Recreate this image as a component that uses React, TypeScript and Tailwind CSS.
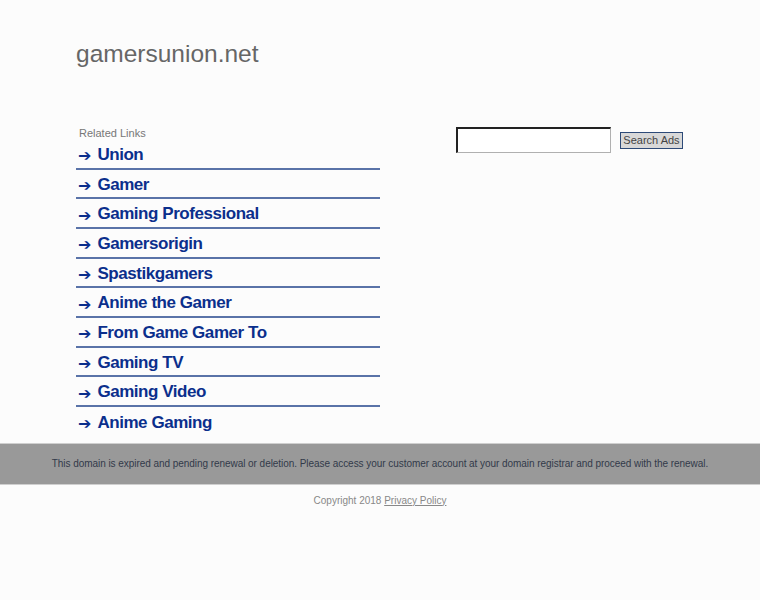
const links = [
  "Union",
  "Gamer",
  "Gaming Professional",
  "Gamersorigin",
  "Spastikgamers",
  "Anime the Gamer",
  "From Game Gamer To",
  "Gaming TV",
  "Gaming Video",
  "Anime Gaming",
];

export default function App() {
  return (
    <div className="min-h-[600px] bg-[#fcfcfc] font-['Liberation_Sans',Arial,sans-serif]">
      {/* Header */}
      <div className="pl-[76px] pt-[40px]">
        <h1 className="text-[24.5px] leading-[28px] text-[#666666]">gamersunion.net</h1>
      </div>

      {/* Content */}
      <div className="flex items-start pl-[76px] pt-[59px]">
        <div className="w-[304px]">
          <div className="pl-[3px] text-[11px] leading-[13px] text-[#777777]">Related Links</div>
          <ul>
            {links.map((l, i) => (
              <li
                key={l}
                className={
                  i < links.length - 1
                    ? "flex h-[29.67px] items-center border-b-2 border-[#5a73a8]"
                    : "flex h-[29.67px] items-center"
                }
              >
                <a href="#" className="flex items-center pt-[2px] text-[17px] font-bold tracking-[-0.45px] text-[#0b2f8c]">
                  <span className="mr-[6px] ml-[2px] mt-[3px] font-['DejaVu_Sans',sans-serif] text-[16px] font-bold leading-none tracking-normal">
                    ➔
                  </span>
                  {l}
                </a>
              </li>
            ))}
          </ul>
        </div>

        <div className="ml-[76px] flex items-center gap-[9px]">
          <input
            type="text"
            className="h-[26px] w-[155px] border-t-2 border-l-2 border-r border-b border-t-[#222222] border-l-[#222222] border-r-[#b0b0b0] border-b-[#b0b0b0] bg-white outline-none"
          />
          <button className="h-[17px] w-[63px] border border-[#2d4a78] bg-[#d8d8d8] text-[11px] leading-none text-[#444444]">
            Search Ads
          </button>
        </div>
      </div>

      {/* Notice band */}
      <div className="mt-[6px] flex h-[41px] items-center justify-center border-t border-[#cfcfcf] bg-[#999999] text-[10px] tracking-[-0.05px] text-[#323a4a]">
        This domain is expired and pending renewal or deletion. Please access your customer account at your domain registrar and proceed with the renewal.
      </div>
      <div className="h-px bg-[#cfcfcf]" />

      {/* Footer */}
      <div className="pt-[10px] text-center text-[10px] leading-[12px] text-[#888888]">
        Copyright 2018{" "}
        <a href="#" className="underline">
          Privacy Policy
        </a>
      </div>
    </div>
  );
}
